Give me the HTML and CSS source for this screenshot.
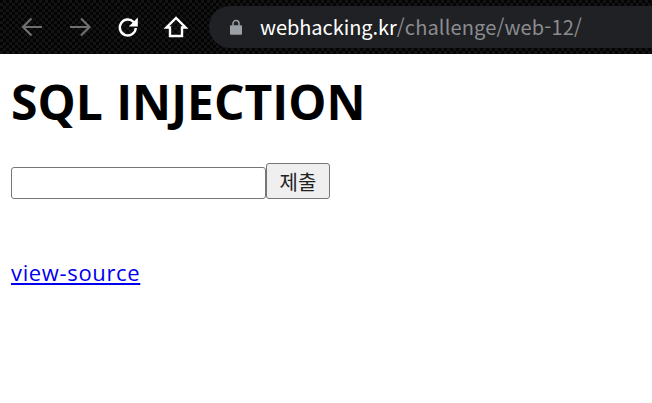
FILE: index.html
```html
<!DOCTYPE html>
<html lang="ko">
<head>
<meta charset="utf-8">
<title>SQL INJECTION</title>
<link rel="stylesheet" href="styles.css">
</head>
<body>
<header class="toolbar">
  <svg class="icon nav-first" viewBox="0 0 24 24"><path class="dim" d="M22 12H3M11.500 3.500 3 12l8.500 8.500"/></svg>
  <svg class="icon nav" viewBox="0 0 24 24"><path class="dim" d="M2 12h19.500M13 3.500l8.500 8.500-8.500 8.500"/></svg>
  <svg class="icon nav" viewBox="0 0 24 24"><path class="bright" d="M19.800 13a8 8 0 1 1-2.300-6.200L20 9.500"/><path class="fill" d="M21.800 2.500v9h-9z"/></svg>
  <svg class="icon nav" viewBox="0 0 24 24"><path class="bright" d="M12 3 2.500 12.500h3.500V21h12v-8.500h3.500z"/></svg>
  <div class="omnibox">
    <svg class="lock" viewBox="0 0 14 18"><path class="fill-grey" d="M1 7h12a1 1 0 0 1 1 1v9a1 1 0 0 1-1 1H1a1 1 0 0 1-1-1V8a1 1 0 0 1 1-1z"/><path class="lock-arc" d="M3.500 7.500V5a3.500 3.500 0 0 1 7 0v2.500"/></svg>
    <span class="url"><span class="host">webhacking.kr</span><span class="path">/challenge/web-12/</span></span>
  </div>
</header>
<main class="page">
  <h1 class="title">SQL INJECTION</h1>
  <form class="search">
    <input class="field" type="text"><button class="submit" type="button">제출</button>
  </form>
  <a class="source" href="#">view-source</a>
</main>
</body>
</html>
```
FILE: styles.css
```css
* { box-sizing: border-box; }
html, body { margin: 0; padding: 0; height: 100%; background: #fff; overflow: hidden; }
body { font-family: "Open Sans", "Noto Sans CJK KR", sans-serif; color: #000; }
.toolbar {
  height: 54px;
  display: flex;
  align-items: center;
  padding: 0 0 0 20px;
  background-color: #060606;
  background-image: conic-gradient(#131313 25%, #040404 0 50%, #131313 0 75%, #040404 0);
  background-size: 6px 6px;
}
.icon { width: 24px; height: 24px; flex: none; }
.nav { margin-left: 24px; }
.nav-first { margin-left: 0; }
.icon path { fill: none; stroke-width: 2.2; }
.icon path.dim { stroke: #6f6f6f; }
.icon path.bright { stroke: #fff; stroke-width: 2.4; }
.icon path.fill { fill: #fff; stroke: none; }
.omnibox {
  margin-left: 21px;
  flex: 1;
  height: 42px;
  display: flex;
  align-items: center;
  padding-left: 21px;
  background: #202124;
  border-radius: 21px 0 0 21px;
}
.lock { width: 12px; height: 16px; }
.fill-grey { fill: #9aa0a6; }
.lock-arc { fill: none; stroke: #9aa0a6; stroke-width: 1.800; }
.url { margin-left: 18px; font-family: "Noto Sans CJK KR", sans-serif; font-size: 20px; line-height: 28px; white-space: nowrap; }
.host { color: #fff; letter-spacing: -0.05px; }
.path { color: #8b8d90; letter-spacing: 0.15px; }
.page { padding: 0 11px; }
.title { margin: 16px 0 0; font-size: 48px; line-height: 64px; font-weight: 700; word-spacing: 1px; }
.search { display: flex; align-items: flex-end; margin-top: 29px; }
.field { width: 255px; height: 32px; padding: 0 2px; border: 1px solid #767676; border-radius: 3px; background: #fff; font-size: 20px; }
.submit { width: 64px; height: 36px; padding: 0; border: 1px solid #767676; border-radius: 3px; background: #efefef; color: #222; font: 20px "Noto Sans CJK KR", sans-serif; }
.source { display: inline-block; margin-top: 57px; font-size: 22px; line-height: 32px; letter-spacing: 0.65px; color: #00e; text-decoration: underline; }
```
